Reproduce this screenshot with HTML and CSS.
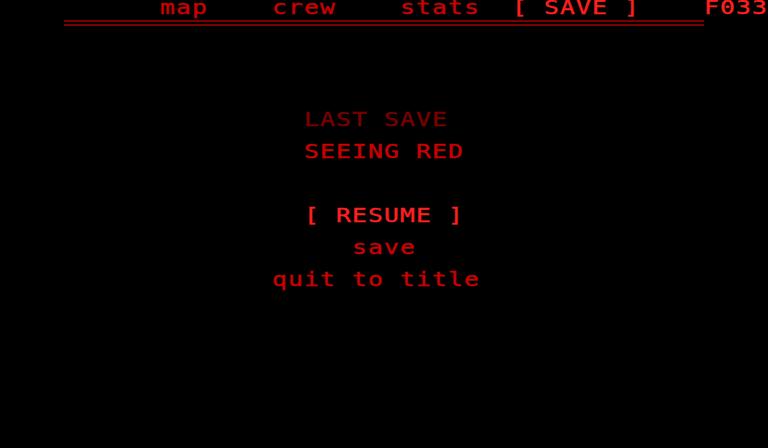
FILE: index.html
```html
<!DOCTYPE html>
<html lang="en">
<head>
<meta charset="utf-8">
<title>Pause</title>
<link rel="stylesheet" href="styles.css">
</head>
<body>
<div class="screen">
  <nav class="tabs">
    <div class="cell dim tab-map"><span class="t">map</span></div>
    <div class="cell dim tab-crew"><span class="t">crew</span></div>
    <div class="cell dim tab-stats"><span class="t">stats</span></div>
    <div class="cell hot tab-save"><span class="t">[ SAVE ]</span></div>
    <div class="cell hot tab-code"><span class="t">F033</span></div>
    <div class="rule"></div>
  </nav>

  <div class="cell faint last-save"><span class="t">LAST SAVE</span></div>
  <div class="cell mid save-name"><span class="t">SEEING RED</span></div>

  <div class="cell hot opt-resume"><span class="t">[ RESUME ]</span></div>
  <div class="cell mid opt-save"><span class="t">save</span></div>
  <div class="cell mid opt-quit"><span class="t">quit to title</span></div>
</div>
</body>
</html>
```
FILE: styles.css
```css
html, body {
  margin: 0;
  padding: 0;
  background: #000;
}
body {
  width: 768px;
  height: 448px;
  overflow: hidden;
}
.screen {
  display: grid;
  grid-template-columns: repeat(48, 16px);
  grid-template-rows: repeat(28, 16px);
  width: 768px;
  height: 448px;
  font-family: "DejaVu Sans Mono", "Liberation Mono", monospace;
  font-size: 19px;
  line-height: 14px;
}
.tabs {
  display: contents;
}
.cell {
  white-space: pre;
  overflow: visible;
}
.t {
  display: inline-block;
  letter-spacing: 0.87px;
  transform: scaleX(1.3);
  transform-origin: 0 0;
  -webkit-text-stroke: 0.35px currentColor;
}

/* character-grid placement (16px cells) */
.tab-map   { grid-column: 11 / span 3;  grid-row: 1; }
.tab-crew  { grid-column: 18 / span 4;  grid-row: 1; }
.tab-stats { grid-column: 26 / span 5;  grid-row: 1; }
.tab-save  { grid-column: 33 / span 8;  grid-row: 1; }
.tab-code  { grid-column: 45 / span 4;  grid-row: 1; }
.last-save { grid-column: 20 / span 9;  grid-row: 8; }
.save-name { grid-column: 20 / span 10; grid-row: 10; }
.opt-resume{ grid-column: 20 / span 10; grid-row: 14; }
.opt-save  { grid-column: 23 / span 4;  grid-row: 16; }
.opt-quit  { grid-column: 18 / span 13; grid-row: 18; }

.dim { color: #cc0000; }
.mid { color: #cc0000; }
.faint { color: #7a0000; }
.hot { color: #ff2020; }

.rule {
  grid-column: 5 / span 40;
  grid-row: 2;
  margin-top: 4px;
  height: 2px;
  border-top: 2px solid #7a0000;
  border-bottom: 2px solid #7a0000;
}
```
